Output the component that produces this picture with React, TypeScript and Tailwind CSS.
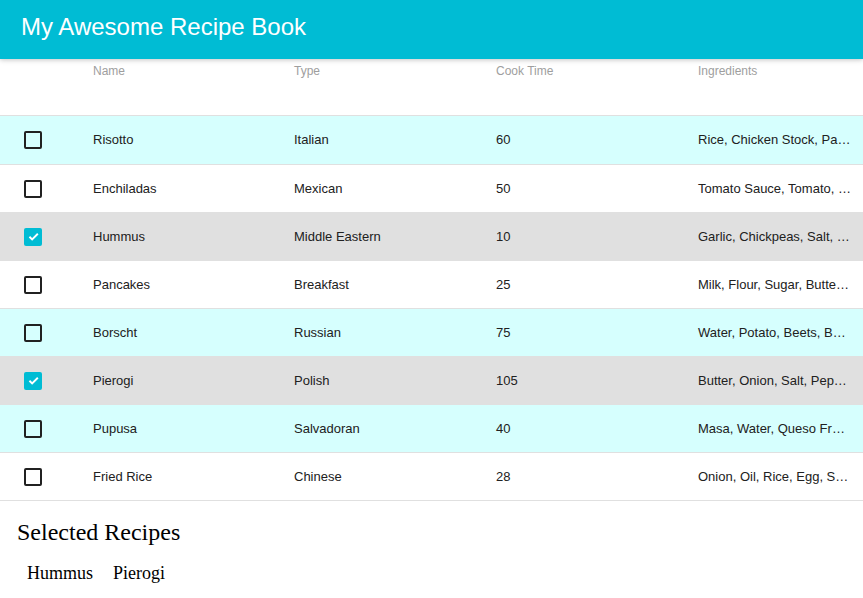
const recipes = [
  { name: "Risotto", type: "Italian", time: 60, ingredients: "Rice, Chicken Stock, Parmesan, Butter", selected: false },
  { name: "Enchiladas", type: "Mexican", time: 50, ingredients: "Tomato Sauce, Tomato, Onion, Tortillas", selected: false },
  { name: "Hummus", type: "Middle Eastern", time: 10, ingredients: "Garlic, Chickpeas, Salt, Olive Oil", selected: true },
  { name: "Pancakes", type: "Breakfast", time: 25, ingredients: "Milk, Flour, Sugar, Butter, Eggs", selected: false },
  { name: "Borscht", type: "Russian", time: 75, ingredients: "Water, Potato, Beets, Butter", selected: false },
  { name: "Pierogi", type: "Polish", time: 105, ingredients: "Butter, Onion, Salt, Pepper, Flour", selected: true },
  { name: "Pupusa", type: "Salvadoran", time: 40, ingredients: "Masa, Water, Queso Fresco, Beans", selected: false },
  { name: "Fried Rice", type: "Chinese", time: 28, ingredients: "Onion, Oil, Rice, Egg, Soy Sauce", selected: false },
];

const cols = "grid grid-cols-[69px_201px_202px_202px_189px]";

function Checkbox({ checked }: { checked: boolean }) {
  if (checked) {
    return (
      <div className="w-[18px] h-[18px] rounded-[2px] bg-[#00bcd4] flex items-center justify-center">
        <svg width="13" height="13" viewBox="0 0 24 24" fill="none" stroke="white" strokeWidth="3.5">
          <path d="M4.5 12.5l5 5L20 7" />
        </svg>
      </div>
    );
  }
  return <div className="w-[18px] h-[18px] rounded-[2px] border-2 border-[#212121]" />;
}

export default function App() {
  return (
    <div className="min-h-[598px] bg-white font-['Liberation_Sans',Arial,sans-serif]">
      <header className="h-[59px] bg-[#00bcd4] flex items-center pl-[21px] pb-[5px] shadow-[0_1px_6px_rgba(0,0,0,0.12),0_1px_4px_rgba(0,0,0,0.12)] relative z-10">
        <h1 className="text-white text-[24px] leading-none">My Awesome Recipe Book</h1>
      </header>

      <div className="overflow-hidden">
        <div className={`${cols} h-[57px] border-b border-[#e0e0e0] text-[12px] text-[#9e9e9e]`}>
          <div />
          {["Name", "Type", "Cook Time", "Ingredients"].map((h) => (
            <div key={h} className="pl-6 pt-[3px]">{h}</div>
          ))}
        </div>

        {recipes.map((r, i) => {
          const bg = r.selected ? "bg-[#e0e0e0]" : i % 2 === 0 ? "bg-[#d6fffe]" : "bg-white";
          return (
            <div
              key={r.name}
              className={`${cols} ${i === 0 ? "h-[49px]" : "h-[48px]"} border-b border-[#e0e0e0] items-center text-[13px] text-[#212121] ${bg}`}
            >
              <div className="pl-6">
                <Checkbox checked={r.selected} />
              </div>
              <div className="pl-6 truncate">{r.name}</div>
              <div className="pl-6 truncate">{r.type}</div>
              <div className="pl-6 truncate">{r.time}</div>
              <div className="pl-6 pr-3 truncate">{r.ingredients}</div>
            </div>
          );
        })}
      </div>

      <section className="font-['Liberation_Serif','Times_New_Roman',serif] text-black">
        <h2 className="text-[24px] ml-[17px] mt-[18px] leading-[27px]">Selected Recipes</h2>
        <div className="flex gap-5 ml-[27px] mt-[17px] text-[18px] leading-[20px]">
          {recipes.filter((r) => r.selected).map((r) => (
            <span key={r.name}>{r.name}</span>
          ))}
        </div>
      </section>
    </div>
  );
}
